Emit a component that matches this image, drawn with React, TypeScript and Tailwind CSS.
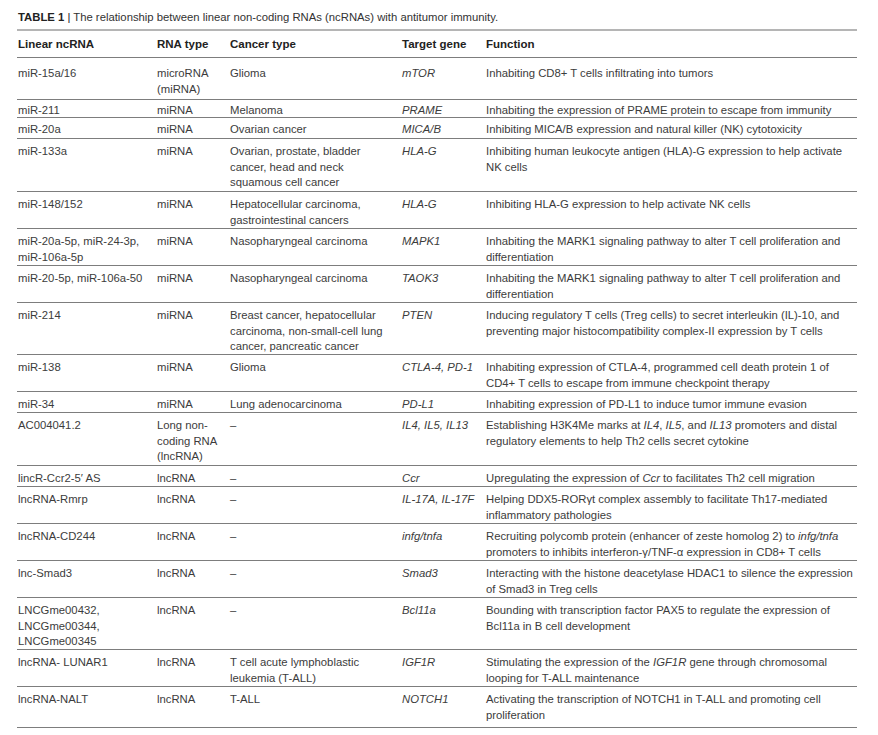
import React from "react";

type Row = {
  h: number;
  pt: number;
  a: React.ReactNode;
  b: React.ReactNode;
  c: React.ReactNode;
  d: React.ReactNode;
  e: React.ReactNode;
};

const I = ({ children }: { children: React.ReactNode }) => <i>{children}</i>;

const rows: Row[] = [
  { h: 42, pt: 8, a: "miR-15a/16", b: <>microRNA<br />(miRNA)</>, c: "Glioma", d: "mTOR", e: "Inhabiting CD8+ T cells infiltrating into tumors" },
  { h: 18, pt: 3, a: "miR-211", b: "miRNA", c: "Melanoma", d: "PRAME", e: "Inhabiting the expression of PRAME protein to escape from immunity" },
  { h: 21, pt: 4, a: "miR-20a", b: "miRNA", c: "Ovarian cancer", d: "MICA/B", e: "Inhibiting MICA/B expression and natural killer (NK) cytotoxicity" },
  { h: 53, pt: 5, a: "miR-133a", b: "miRNA", c: <>Ovarian, prostate, bladder<br />cancer, head and neck<br />squamous cell cancer</>, d: "HLA-G", e: <>Inhibiting human leukocyte antigen (HLA)-G expression to help activate<br />NK cells</> },
  { h: 37, pt: 5, a: "miR-148/152", b: "miRNA", c: <>Hepatocellular carcinoma,<br />gastrointestinal cancers</>, d: "HLA-G", e: "Inhibiting HLA-G expression to help activate NK cells" },
  { h: 37, pt: 5, a: <>miR-20a-5p, miR-24-3p,<br />miR-106a-5p</>, b: "miRNA", c: "Nasopharyngeal carcinoma", d: "MAPK1", e: <>Inhabiting the MARK1 signaling pathway to alter T cell proliferation and<br />differentiation</> },
  { h: 37, pt: 5, a: "miR-20-5p, miR-106a-50", b: "miRNA", c: "Nasopharyngeal carcinoma", d: "TAOK3", e: <>Inhabiting the MARK1 signaling pathway to alter T cell proliferation and<br />differentiation</> },
  { h: 52, pt: 5, a: "miR-214", b: "miRNA", c: <>Breast cancer, hepatocellular<br />carcinoma, non-small-cell lung<br />cancer, pancreatic cancer</>, d: "PTEN", e: <>Inducing regulatory T cells (Treg cells) to secret interleukin (IL)-10, and<br />preventing major histocompatibility complex-II expression by T cells</> },
  { h: 37, pt: 5, a: "miR-138", b: "miRNA", c: "Glioma", d: "CTLA-4, PD-1", e: <>Inhabiting expression of CTLA-4, programmed cell death protein 1 of<br />CD4+ T cells to escape from immune checkpoint therapy</> },
  { h: 21, pt: 5, a: "miR-34", b: "miRNA", c: "Lung adenocarcinoma", d: "PD-L1", e: "Inhabiting expression of PD-L1 to induce tumor immune evasion" },
  { h: 53, pt: 5, a: "AC004041.2", b: <>Long non-<br />coding RNA<br />(lncRNA)</>, c: "–", d: <><I>IL4</I>, <I>IL5</I>, <I>IL13</I></>, e: <>Establishing H3K4Me marks at <I>IL4</I>, <I>IL5</I>, and <I>IL13</I> promoters and distal<br />regulatory elements to help Th2 cells secret cytokine</> },
  { h: 21, pt: 5, a: "lincR-Ccr2-5′ AS", b: "lncRNA", c: "–", d: "Ccr", e: <>Upregulating the expression of <I>Ccr</I> to facilitates Th2 cell migration</> },
  { h: 37, pt: 5, a: "lncRNA-Rmrp", b: "lncRNA", c: "–", d: "IL-17A, IL-17F", e: <>Helping DDX5-RORγt complex assembly to facilitate Th17-mediated<br />inflammatory pathologies</> },
  { h: 37, pt: 5, a: "lncRNA-CD244", b: "lncRNA", c: "–", d: "infg/tnfa", e: <>Recruiting polycomb protein (enhancer of zeste homolog 2) to <I>infg/tnfa</I><br />promoters to inhibits interferon-γ/TNF-α expression in CD8+ T cells</> },
  { h: 37, pt: 5, a: "lnc-Smad3", b: "lncRNA", c: "–", d: "Smad3", e: <>Interacting with the histone deacetylase HDAC1 to silence the expression<br />of Smad3 in Treg cells</> },
  { h: 52, pt: 5, a: <>LNCGme00432,<br />LNCGme00344,<br />LNCGme00345</>, b: "lncRNA", c: "–", d: "Bcl11a", e: <>Bounding with transcription factor PAX5 to regulate the expression of<br />Bcl11a in B cell development</> },
  { h: 37, pt: 5, a: "lncRNA- LUNAR1", b: "lncRNA", c: <>T cell acute lymphoblastic<br />leukemia (T-ALL)</>, d: "IGF1R", e: <>Stimulating the expression of the <I>IGF1R</I> gene through chromosomal<br />looping for T-ALL maintenance</> },
  { h: 41, pt: 5, a: "lncRNA-NALT", b: "lncRNA", c: "T-ALL", d: "NOTCH1", e: <>Activating the transcription of NOTCH1 in T-ALL and promoting cell<br />proliferation</> },
];

export default function App() {
  return (
    <div
      className="w-[878px] h-[735px] bg-white text-[#3c3c3c] overflow-hidden"
      style={{ fontFamily: '"Liberation Sans", Arial, sans-serif' }}
    >
      <div className="pl-[18px] pt-[10px] text-[11.3px] leading-[14px] text-[#333] whitespace-nowrap">
        <span className="font-bold text-[#222]">TABLE 1</span>
        <span className="text-[#222]"> | </span>
        The relationship between linear non-coding RNAs (ncRNAs) with antitumor immunity.
      </div>
      <div className="ml-[17px] w-[840px] mt-[5px] border-t-2 border-[#b5b5b5]">
        <div className="grid grid-cols-[140px_73px_172px_84px_1fr] h-[27px] items-center pt-[2px] border-b border-[#7d7d7d] text-[11.5px] font-bold text-[#222] whitespace-nowrap">
          <div className="pl-px">Linear ncRNA</div>
          <div>RNA type</div>
          <div>Cancer type</div>
          <div>Target gene</div>
          <div>Function</div>
        </div>
        {rows.map((r, i) => (
          <div
            key={i}
            className="grid grid-cols-[140px_73px_172px_84px_1fr] border-b border-[#7d7d7d] text-[11.3px] leading-[15.5px] whitespace-nowrap"
            style={{ height: r.h, paddingTop: r.pt }}
          >
            <div className="pl-px">{r.a}</div>
            <div>{r.b}</div>
            <div>{r.c}</div>
            <div className="italic">{r.d}</div>
            <div>{r.e}</div>
          </div>
        ))}
      </div>
    </div>
  );
}
